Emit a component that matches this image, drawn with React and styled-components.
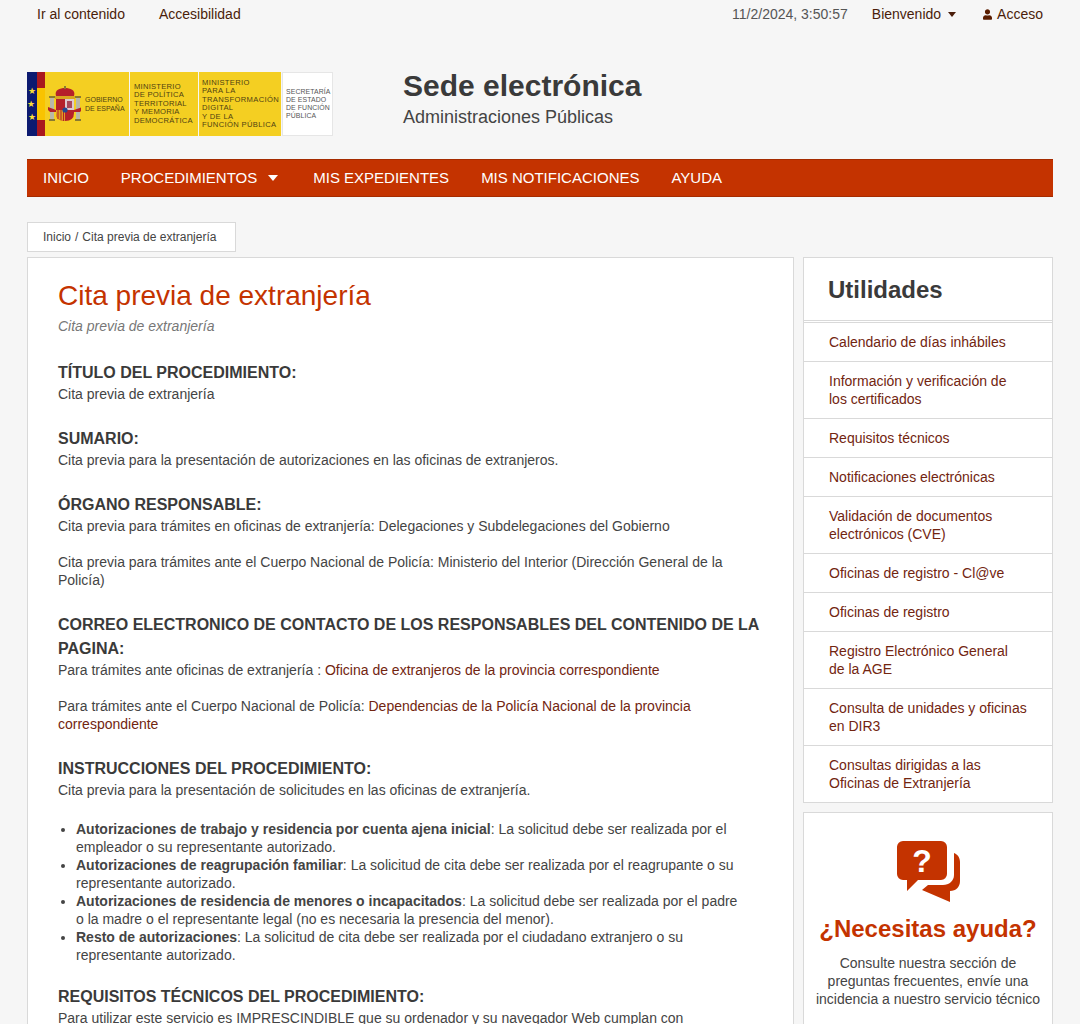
import React from "react";
import styled, { createGlobalStyle } from "styled-components";
import { FaUser } from "react-icons/fa";

const RED = "#c43300";
const LINK = "#722510";
const TEXT = "#3a3a3a";
const LINE = "#d9d9d9";

const GlobalStyle = createGlobalStyle`
  html, body {
    margin: 0;
    height: 1024px;
    overflow: hidden;
    background: #f6f6f6;
  }
  body {
    font-family: "Liberation Sans", Arial, sans-serif;
    font-size: 14px;
    line-height: 18px;
    color: #444;
  }
  a {
    color: ${LINK};
    text-decoration: none;
  }
`;

const Page = styled.div`
  padding: 0 27px;
`;

const TopBar = styled.div`
  display: flex;
  justify-content: space-between;
  align-items: center;
  height: 28px;
  padding: 0 10px;
`;

const TopGroup = styled.div`
  display: flex;
  align-items: center;
  gap: ${(p) => p.$gap}px;
`;

const TopLink = styled.a`
  display: flex;
  align-items: center;
  color: #4a1d0a;
  font-size: 14px;
`;

const AccessLink = styled(TopLink)`
  margin-left: 3px;
`;

const Clock = styled.span`
  color: #555;
`;

const Caret = styled.span`
  display: inline-block;
  width: 0;
  height: 0;
  margin-left: ${(p) => p.$left}px;
  margin-right: ${(p) => p.$right || 0}px;
  border-left: ${(p) => p.$size}px solid transparent;
  border-right: ${(p) => p.$size}px solid transparent;
  border-top: ${(p) => p.$size + 1}px solid currentColor;
`;

const UserIcon = styled(FaUser)`
  width: 9px;
  height: 11px;
  margin-right: 5px;
  color: #5a1d00;
`;

const Header = styled.header`
  display: flex;
  align-items: flex-start;
  gap: 70px;
  margin-top: 44px;
  height: 64px;
`;

const Logo = styled.div`
  display: flex;
  width: 306px;
  height: 64px;
  flex: none;
`;

const FlagBlue = styled.div`
  width: 10px;
  background: #0c1a70;
  display: flex;
  flex-direction: column;
  justify-content: center;
  align-items: center;
  gap: 4px;
  color: #f8dc3a;
  font-size: 9px;
  line-height: 9px;
`;

const MidStar = styled.span`
  margin-right: 3px;
`;

const FlagStripes = styled.div`
  width: 8px;
  background: linear-gradient(#a9181e 0 25%, #f9c300 25% 75%, #a9181e 75%);
`;

const LogoPanel = styled.div`
  display: flex;
  flex: none;
  align-items: center;
  gap: ${(p) => p.$gap || 0}px;
  width: ${(p) => p.$width}px;
  margin-right: ${(p) => (p.$white ? 0 : 1)}px;
  padding-left: ${(p) => p.$pad}px;
  box-sizing: border-box;
  background: ${(p) => (p.$white ? "#fff" : "#f4cf22")};
  border: ${(p) => (p.$white ? "1px solid #e6e6e6" : "0")};
  color: ${(p) => (p.$white ? "#555" : "#4f4212")};
  font-family: "Liberation Sans", sans-serif;
  font-size: ${(p) => p.$size}px;
  letter-spacing: ${(p) => p.$track || 0}px;
  line-height: ${(p) => p.$leading}px;
  white-space: pre-line;
`;

const TitleBlock = styled.div`
  display: flex;
  flex-direction: column;
`;

const SiteTitle = styled.div`
  font-size: 30px;
  line-height: 28px;
  font-weight: bold;
  color: ${TEXT};
`;

const SiteSubtitle = styled.div`
  margin-top: 6px;
  font-size: 18px;
  line-height: 22px;
`;

const Nav = styled.nav`
  display: flex;
  align-items: center;
  gap: 32px;
  height: 38px;
  margin-top: 23px;
  padding: 0 16px;
  box-sizing: border-box;
  background: ${RED};
  border-top: 1px solid #a52b00;
  border-bottom: 1px solid #a52b00;
`;

const NavItem = styled.a`
  display: flex;
  align-items: center;
  color: #fff;
  font-size: 15px;
`;

const Breadcrumb = styled.div`
  width: 209px;
  box-sizing: border-box;
  margin-top: 25px;
  padding: 5px 15px;
  background: #fff;
  border: 1px solid ${LINE};
  font-size: 12px;
  white-space: nowrap;
`;

const CrumbSep = styled.span`
  margin: 0 4px 0 4px;
`;

const Columns = styled.div`
  display: flex;
  align-items: flex-start;
  gap: 9px;
  margin-top: 5px;
`;

const Main = styled.main`
  width: 767px;
  box-sizing: border-box;
  padding: 20px 30px 40px;
  background: #fff;
  border: 1px solid ${LINE};
`;

const PageTitle = styled.h1`
  margin: 0;
  color: ${RED};
  font-size: 28px;
  line-height: 36px;
  font-weight: normal;
`;

const Lead = styled.p`
  margin: 3px 0 0;
  padding-bottom: 2px;
  color: #777;
  font-style: italic;
`;

const SectionTitle = styled.h2`
  margin: 24px 0 0;
  font-size: 16px;
  line-height: 24px;
  font-weight: bold;
  color: ${TEXT};
`;

const Para = styled.p`
  margin: ${(p) => (p.$spaced ? "18px" : "0")} 0 0;
`;

const BulletList = styled.ul`
  margin: 21px 0 -3px;
  padding: 0 20px 0 18px;
`;

const Side = styled.aside`
  display: flex;
  flex-direction: column;
  gap: 9px;
  width: 250px;
`;

const SideCard = styled.section`
  box-sizing: border-box;
  background: #fff;
  border: 1px solid ${LINE};
`;

const SideHead = styled.h3`
  margin: 0;
  padding: 15px 24px 13px;
  height: 34px;
  font-size: 24px;
  line-height: 34px;
  font-weight: bold;
  color: ${TEXT};
  border-bottom: 3px double ${LINE};
`;

const SideItem = styled.a`
  display: block;
  padding: 10px 25px 10px;
  color: ${LINK};
  border-top: ${(p) => (p.$first ? "0" : `1px solid ${LINE}`)};
`;

const HelpCard = styled(SideCard)`
  display: flex;
  flex-direction: column;
  align-items: center;
  height: 260px;
  padding-top: 27px;
`;

const HelpTitle = styled.div`
  margin-top: 11px;
  color: ${RED};
  font-size: 24px;
  line-height: 30px;
  font-weight: bold;
`;

const HelpText = styled.p`
  margin: 10px 0 0;
  text-align: center;
  line-height: 18px;
`;

const links = [
  "Calendario de días inhábiles",
  "Información y verificación de\nlos certificados",
  "Requisitos técnicos",
  "Notificaciones electrónicas",
  "Validación de documentos\nelectrónicos (CVE)",
  "Oficinas de registro - Cl@ve",
  "Oficinas de registro",
  "Registro Electrónico General\nde la AGE",
  "Consulta de unidades y oficinas\nen DIR3",
  "Consultas dirigidas a las\nOficinas de Extranjería",
];

const bullets = [
  ["Autorizaciones de trabajo y residencia por cuenta ajena inicial", ": La solicitud debe ser realizada por el empleador o su representante autorizado."],
  ["Autorizaciones de reagrupación familiar", ": La solicitud de cita debe ser realizada por el reagrupante o su representante autorizado."],
  ["Autorizaciones de residencia de menores o incapacitados", ": La solicitud debe ser realizada por el padre o la madre o el representante legal (no es necesaria la presencia del menor)."],
  ["Resto de autorizaciones", ": La solicitud de cita debe ser realizada por el ciudadano extranjero o su representante autorizado."],
];

function CoatOfArms() {
  return (
    <svg width="33" height="36" viewBox="0 0 33 36">
      {/* columnas */}
      <rect x="2" y="12" width="4" height="21" fill="#b9b8a8" />
      <rect x="1" y="10" width="6" height="2" fill="#8a7a30" />
      <rect x="1" y="33" width="6" height="2" fill="#8a7a30" />
      <rect x="28" y="12" width="4" height="21" fill="#b9b8a8" />
      <rect x="27" y="10" width="6" height="2" fill="#8a7a30" />
      <rect x="27" y="33" width="6" height="2" fill="#8a7a30" />
      {/* cintas */}
      <path d="M0 21 L8 24 L8 26 L2 26 L0 24Z M34 21 L26 24 L26 26 L32 26 L34 24Z" fill="#b5202a" />
      {/* corona */}
      <path d="M8 10 C6 4 12 2 17 2 C22 2 28 4 26 10 Z" fill="#b5202a" />
      <path d="M16 0 H18 V3 H16Z" fill="#8a7a30" />
      <rect x="7" y="10" width="20" height="3" fill="#d8a520" />
      {/* escudo */}
      <path d="M8 13 H26 V27 Q26 35 17 35 Q8 35 8 27Z" fill="#b5202a" />
      <rect x="17" y="13" width="9" height="11" fill="#ddc9cf" />
      <rect x="19" y="15" width="5" height="7" fill="#a9485a" />
      <path d="M8 24 H17 V35 Q8 35 8 27Z" fill="#e0a020" />
      <path d="M10 24 V33 M13 24 V34 M15.5 24 V35" stroke="#b5202a" strokeWidth="1" />
      <circle cx="17" cy="24" r="2.6" fill="#26478f" />
    </svg>
  );
}

function HelpIcon() {
  return (
    <svg width="65" height="63" viewBox="0 0 65 63">
      <path d="M7 1H45a6 6 0 0 1 6 6V34a6 6 0 0 1-6 6H22L11 51V40H7a6 6 0 0 1-6-6V7a6 6 0 0 1 6-6Z" fill={RED} />
      <path d="M58 13C61 14 64 17 64 22V41C64 47 60 51 54 51V62L26 50L32 45H47C53 45 58 41 58 35Z" fill={RED} />
      <text x="26" y="32" textAnchor="middle" fill="#fff" fontSize="32" fontWeight="bold" fontFamily="Liberation Sans, sans-serif">?</text>
    </svg>
  );
}

export default function App() {
  return (
    <Page>
      <GlobalStyle />
      <TopBar>
        <TopGroup $gap={34}>
          <TopLink>Ir al contenido</TopLink>
          <TopLink>Accesibilidad</TopLink>
        </TopGroup>
        <TopGroup $gap={24}>
          <Clock>11/2/2024, 3:50:57</Clock>
          <TopLink>
            Bienvenido<Caret $left={7} $size={4} />
          </TopLink>
          <AccessLink>
            <UserIcon />
            Acceso
          </AccessLink>
        </TopGroup>
      </TopBar>

      <Header>
        <Logo>
          <FlagBlue>
            <span>★</span>
            <MidStar>★</MidStar>
            <span>★</span>
          </FlagBlue>
          <FlagStripes />
          <LogoPanel $width={84} $pad={3} $gap={4} $size={7} $leading={9}>
            <CoatOfArms />
            {"GOBIERNO\nDE ESPAÑA"}
          </LogoPanel>
          <LogoPanel $width={68} $pad={4} $size={7.6} $track={0.25} $leading={8.5}>
            {"MINISTERIO\nDE POLÍTICA\nTERRITORIAL\nY MEMORIA\nDEMOCRÁTICA"}
          </LogoPanel>
          <LogoPanel $width={82} $pad={3} $size={7.6} $track={0.35} $leading={8.5}>
            {"MINISTERIO\nPARA LA\nTRANSFORMACIÓN\nDIGITAL\nY DE LA\nFUNCIÓN PÚBLICA"}
          </LogoPanel>
          <LogoPanel $width={51} $pad={3} $size={6.9} $track={0.1} $leading={7.8} $white>
            {"SECRETARÍA\nDE ESTADO\nDE FUNCIÓN\nPÚBLICA"}
          </LogoPanel>
        </Logo>
        <TitleBlock>
          <SiteTitle>Sede electrónica</SiteTitle>
          <SiteSubtitle>Administraciones Públicas</SiteSubtitle>
        </TitleBlock>
      </Header>

      <Nav>
        <NavItem>INICIO</NavItem>
        <NavItem>
          PROCEDIMIENTOS<Caret $left={11} $right={3} $size={5} />
        </NavItem>
        <NavItem>MIS EXPEDIENTES</NavItem>
        <NavItem>MIS NOTIFICACIONES</NavItem>
        <NavItem>AYUDA</NavItem>
      </Nav>

      <Breadcrumb>
        Inicio<CrumbSep>/</CrumbSep>Cita previa de extranjería
      </Breadcrumb>

      <Columns>
        <Main>
          <PageTitle>Cita previa de extranjería</PageTitle>
          <Lead>Cita previa de extranjería</Lead>

          <SectionTitle>TÍTULO DEL PROCEDIMIENTO:</SectionTitle>
          <Para>Cita previa de extranjería</Para>

          <SectionTitle>SUMARIO:</SectionTitle>
          <Para>Cita previa para la presentación de autorizaciones en las oficinas de extranjeros.</Para>

          <SectionTitle>ÓRGANO RESPONSABLE:</SectionTitle>
          <Para>Cita previa para trámites en oficinas de extranjería: Delegaciones y Subdelegaciones del Gobierno</Para>
          <Para $spaced>Cita previa para trámites ante el Cuerpo Nacional de Policía: Ministerio del Interior (Dirección General de la Policía)</Para>

          <SectionTitle>CORREO ELECTRONICO DE CONTACTO DE LOS RESPONSABLES DEL CONTENIDO DE LA PAGINA:</SectionTitle>
          <Para>Para trámites ante oficinas de extranjería : <a>Oficina de extranjeros de la provincia correspondiente</a></Para>
          <Para $spaced>Para trámites ante el Cuerpo Nacional de Policía: <a>Dependencias de la Policía Nacional de la provincia correspondiente</a></Para>

          <SectionTitle>INSTRUCCIONES DEL PROCEDIMIENTO:</SectionTitle>
          <Para>Cita previa para la presentación de solicitudes en las oficinas de extranjería.</Para>
          <BulletList>
            {bullets.map(([head, rest]) => (
              <li key={head}>
                <strong>{head}</strong>
                {rest}
              </li>
            ))}
          </BulletList>

          <SectionTitle>REQUISITOS TÉCNICOS DEL PROCEDIMIENTO:</SectionTitle>
          <Para>Para utilizar este servicio es IMPRESCINDIBLE que su ordenador y su navegador Web cumplan con</Para>
        </Main>

        <Side>
          <SideCard>
            <SideHead>Utilidades</SideHead>
            {links.map((l, i) => (
              <SideItem key={l} $first={i === 0}>
                {l.split("\n").map((t) => (
                  <div key={t}>{t}</div>
                ))}
              </SideItem>
            ))}
          </SideCard>
          <HelpCard>
            <HelpIcon />
            <HelpTitle>¿Necesitas ayuda?</HelpTitle>
            <HelpText>
              Consulte nuestra sección de
              <br />
              preguntas frecuentes, envíe una
              <br />
              incidencia a nuestro servicio técnico
            </HelpText>
          </HelpCard>
        </Side>
      </Columns>
    </Page>
  );
}
